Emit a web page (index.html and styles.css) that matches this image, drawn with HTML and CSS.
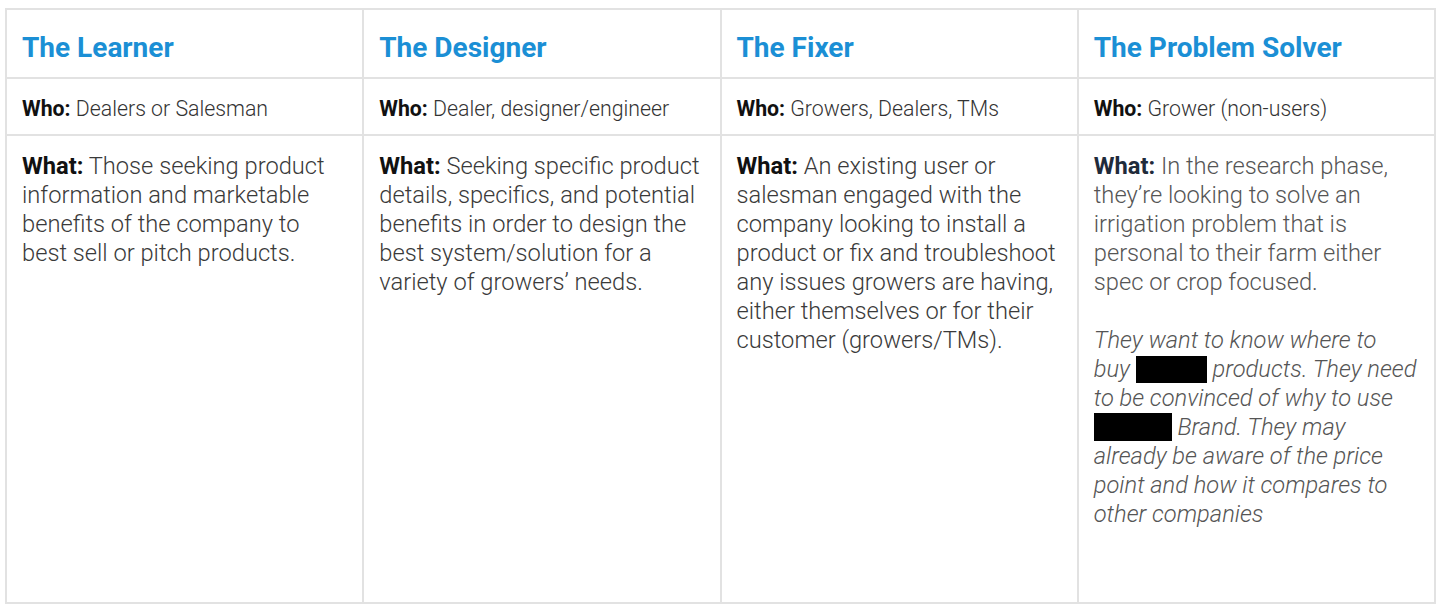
FILE: index.html
```html
<!DOCTYPE html>
<html lang="en">
<head>
<meta charset="utf-8">
<title>Personas</title>
<link rel="stylesheet" href="styles.css">
</head>
<body>
<div class="table">
  <div class="cell head"><h2>The Learner</h2></div>
  <div class="cell head"><h2>The Designer</h2></div>
  <div class="cell head"><h2>The Fixer</h2></div>
  <div class="cell head"><h2>The Problem Solver</h2></div>

  <div class="cell who"><p><b>Who:</b> Dealers or Salesman</p></div>
  <div class="cell who"><p><b>Who:</b> Dealer, designer/engineer</p></div>
  <div class="cell who"><p><b>Who:</b> Growers, Dealers, TMs</p></div>
  <div class="cell who"><p><b>Who:</b> Grower (non-users)</p></div>

  <div class="cell what"><p><b>What:</b> Those seeking product information and marketable benefits of the company to best sell or pitch products.</p></div>
  <div class="cell what"><p><b>What:</b> Seeking specific product details, specifics, and potential benefits in order to design the best system/solution for a variety of growers’ needs.</p></div>
  <div class="cell what"><p><b>What:</b> An existing user or salesman engaged with the company looking to install a product or fix and troubleshoot any issues growers are having, either themselves or for their customer (growers/TMs).</p></div>
  <div class="cell what alt">
    <p><b>What:</b> In the research phase, they’re looking to solve an irrigation problem that is personal to their farm either spec or crop focused.</p>
    <p class="note">They want to know where to buy&nbsp;<span class="redact r1"></span> products. They need to be convinced of why to use <span class="redact r2"></span> Brand. They may already be aware of the price point and how it compares to other companies</p>
  </div>
</div>
</body>
</html>
```

FILE: styles.css
```css
* { box-sizing: border-box; }
html, body { margin: 0; background: #fff; }
body {
  padding: 8px 4px 6px 5px;
  font-family: Roboto, "Liberation Sans", sans-serif;
}
.table {
  width: 1431px;
  height: 596px;
  display: grid;
  grid-template-columns: repeat(4, 1fr);
  grid-template-rows: 69px 57px 1fr;
  border-top: 2px solid #e2e2e2;
  border-left: 2px solid #e2e2e2;
}
.cell {
  border-right: 2px solid #e2e2e2;
  border-bottom: 2px solid #e2e2e2;
  padding: 0 15px;
}
.cell p { margin: 0; }
.head {
  display: flex;
  align-items: center;
  padding-top: 7px;
}
.head h2 {
  margin: 0;
  font-size: 28px;
  font-weight: 700;
  color: #1b8fd5;
}
.who {
  display: flex;
  align-items: center;
  font-size: 21.3px;
  font-weight: 300;
  color: #333;
  padding-top: 3px;
}
.who b { font-weight: 700; color: #111; }
.what {
  padding-top: 16px;
  font-size: 23.7px;
  font-weight: 300;
  line-height: 29px;
  color: #3a3a3a;
}
.what b { font-weight: 700; color: #111; }
.alt { color: #555; padding-right: 12px; }
.alt b { color: #1f2b3b; }
.alt .note { margin-top: 29px; font-style: italic; }
.redact {
  display: inline-block;
  background: #000;
  vertical-align: -6px;
}
.r1 { width: 71px; height: 27px; }
.r2 { width: 78px; height: 28px; }
```
